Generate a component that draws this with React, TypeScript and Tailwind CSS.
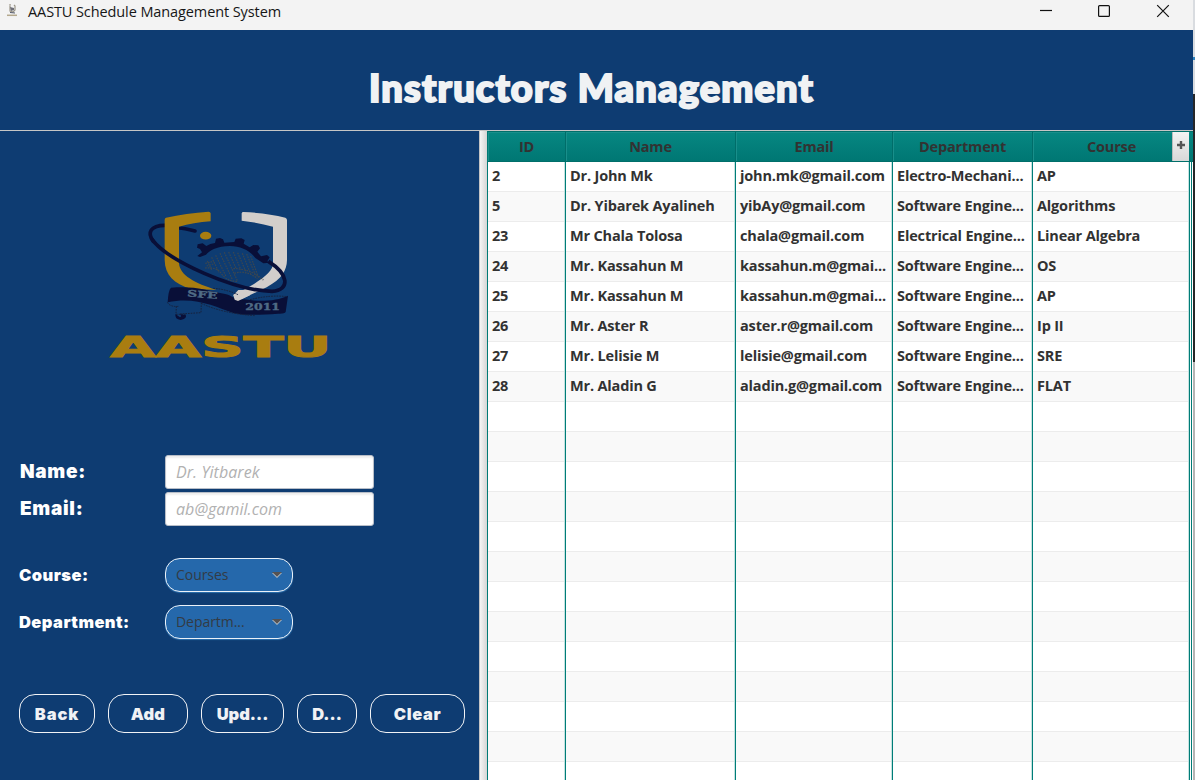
import React from "react";

const rows = [
  ["2", "Dr. John Mk", "john.mk@gmail.com", "Electro-Mechani...", "AP"],
  ["5", "Dr. Yibarek Ayalineh", "yibAy@gmail.com", "Software Engine...", "Algorithms"],
  ["23", "Mr Chala Tolosa", "chala@gmail.com", "Electrical Engine...", "Linear Algebra"],
  ["24", "Mr. Kassahun M", "kassahun.m@gmai...", "Software Engine...", "OS"],
  ["25", "Mr. Kassahun M", "kassahun.m@gmai...", "Software Engine...", "AP"],
  ["26", "Mr. Aster R", "aster.r@gmail.com", "Software Engine...", "Ip II"],
  ["27", "Mr. Lelisie M", "lelisie@gmail.com", "Software Engine...", "SRE"],
  ["28", "Mr. Aladin G", "aladin.g@gmail.com", "Software Engine...", "FLAT"],
];
const columns = ["ID", "Name", "Email", "Department", "Course"];
const gridCols = "grid grid-cols-[78px_170px_157px_140px_157px]";
const allRows = [...rows, ...Array.from({ length: 13 }, () => ["", "", "", "", ""])];

function Logo() {
  return (
    <svg width="240" height="170" viewBox="0 0 720 510" className="block">
      <g fill="none" stroke="#090f38" strokeWidth="11" strokeLinecap="round">
        <path d="M285 93 Q250 84 237 84 M195 76 C152 76 140 98 160 124" />
      </g>
      <path d="M326 35 Q258 39 198 53 Q194 54 194 60 V180 C195 226 222 252 272 266 L350 270 C285 250 239 226 237 190 V80 Q280 68 332 64 V40 Q331 35 326 35Z" fill="#a97d10" />
      <path d="M430 36 Q500 39 556 53 Q561 55 561 60 V180 C560 212 546 236 500 262 L412 303 Q405 303 403 292 L400 284 L430 270 C486 240 519 215 519 190 V80 Q475 68 425 62 V40 Q426 36 430 36Z" fill="#d2cecb" />
      <path d="M156 118 C205 184 405 272 516 274 C572 270 566 222 505 184" fill="none" stroke="#090f38" strokeWidth="11" />
      <ellipse cx="317" cy="107" rx="17" ry="11.5" fill="#a97d10" />
      <path d="M292 168 L306 157 L300 147 L291 143 L293 133 L308 130 L319 138 L331 132 L345 129 L348 116 L360 114 L369 118 L373 128 L403 126 L407 116 L424 115 L434 120 L431 131 L449 142 L460 135 L475 136 L480 145 L472 155 L483 169 L501 165 L509 172 L502 184 L512 188 L490 190 L466 174 C449 150 422 139 390 138 C350 139 330 150 318 164 L300 171Z" fill="#090f38" />
      <g fill="none" stroke="#3c4750" strokeWidth="3.5" strokeDasharray="5 3">
        <path d="M322 183 L335 210 M335 172 L357 217 M347 166 L378 229 M360 160 L397 238 M373 157 L413 244 M386 156 L408 205 M400 156 L423 210 M413 158 L438 216 M427 160 L453 224 M440 162 L468 230 M452 168 L476 234" />
        <path d="M315 204 Q350 200 365 222 T413 244 M400 206 Q450 205 490 240 M403 220 Q440 209 472 236 M316 190 L341 184 M320 198 L344 191" />
      </g>
      <path d="M213 263 C285 257 320 271 360 279 C400 283 399 302 432 298 C480 306 530 303 564 287 L557 336 Q553 342 535 341 C475 345 430 347 400 339 C345 320 285 289 203 307 Q205 270 213 263Z" fill="#090f38" />
      <path d="M415 270 L400 286 L404 299 L414 303 L450 286 L432 270Z" fill="#d2cecb" />
      <g fill="none" stroke="#17223e" strokeWidth="3" strokeDasharray="5 3">
        <path d="M340 265 Q377 267 414 284 M450 299 Q510 284 562 290 M202 307 Q211 322 237 319 M229 319 L228 343 L260 343 M304 308 L303 338 L240 342 M304 310 Q366 340 465 347" />
      </g>
      <path d="M226 342 Q224 358 242 360 Q260 357 258 346 L240 343 Q246 349 240 352 L226 342" fill="#090f38" />
      <g fontFamily="DejaVu Serif, serif" fontWeight="700" fill="#4f6b85" stroke="#4f6b85" strokeWidth="1">
        <text x="261" y="289" fontSize="27" textLength="91" lengthAdjust="spacingAndGlyphs" transform="rotate(5 261 289)">SFE</text>
        <text x="436" y="329" fontSize="27" textLength="104" lengthAdjust="spacingAndGlyphs">2011</text>
      </g>
      <text x="31" y="470" fontFamily="DejaVu Sans, sans-serif" fontWeight="700" fontSize="83" textLength="663" lengthAdjust="spacingAndGlyphs" fill="#a97d10" stroke="#a97d10" strokeWidth="3">AASTU</text>
    </svg>
  );
}

function FormLabel({ children, className }: { children: React.ReactNode; className: string }) {
  return (
    <label className={`w-[146px] shrink-0 font-['Inter',sans-serif] font-black text-white ${className}`}>
      {children}
    </label>
  );
}

function Input({ placeholder }: { placeholder: string }) {
  return (
    <input
      placeholder={placeholder}
      className="h-[34px] w-[209px] rounded-[3px] border border-[#b8bec8] bg-white pl-[10px] font-['Open_Sans',sans-serif] text-[16px] italic tracking-[0.05px] shadow-[inset_0_2px_2px_#eeeeee] outline-none placeholder:text-[#b1b1b1]"
    />
  );
}

function Combo({ text }: { text: string }) {
  return (
    <button className="flex h-[34px] w-[128px] items-center justify-between rounded-[15px] border border-[#eaf1f8] bg-[#2568ab] pl-[10px] pr-[10px] font-['Open_Sans',sans-serif] text-[14px] tracking-[-0.05px] text-[#333b45] shadow-[0_1px_1px_#2b6fae]">
      <span className="-mt-[2px]">{text}</span>
      <svg width="10" height="8" viewBox="0 0 10 8">
        <path d="M0 2 H10 L5 7Z" fill="#b8c0c8" />
        <path d="M0 1 H10 L5 5.7Z" fill="#555252" />
      </svg>
    </button>
  );
}

function ActionButton({ children, className }: { children: React.ReactNode; className: string }) {
  return (
    <button className={`h-[39px] shrink-0 rounded-[16px] border border-[#f1f3f6] pt-px font-['Inter',sans-serif] text-[16.5px] font-black text-[#f0f2f5] ${className}`}>
      {children}
    </button>
  );
}

export default function App() {
  return (
    <div className="flex h-[780px] w-[1195px] overflow-hidden bg-[#0e3c72]">
      <div className="flex w-[1193px] shrink-0 flex-col">
        <div className="flex h-[30px] shrink-0 items-start bg-[#f3f3f3]">
          <svg width="12" height="13" viewBox="0 0 12 13" className="ml-[6px] mt-[4px]">
            <path d="M3 1 L5 .8 M8 1 L9 2 V6 L7 8 L4 7 V2" fill="none" stroke="#9b9689" strokeWidth="1.2" />
            <path d="M4 3 L8 4 L8 6 L5 7Z" fill="#6e6f78" />
            <path d="M4 8.5 L9 9" stroke="#555b6b" />
            <path d="M1 11.3 H11" stroke="#b4a98e" strokeWidth="1.5" />
          </svg>
          <span className="ml-[10px] mt-[1px] whitespace-nowrap font-['Open_Sans',sans-serif] text-[14.5px] leading-[22px] tracking-[-0.1px] text-[#161616]">
            AASTU Schedule Management System
          </span>
          <svg width="132" height="20" viewBox="0 0 132 20" className="ml-auto mr-[22px]" fill="none" stroke="#111" strokeWidth="1.2">
            <path d="M1 10.5 H13" />
            <rect x="59.6" y="5.6" width="10.8" height="10.8" rx="1" />
            <path d="M118.2 5.2 L129.8 16.8 M129.8 5.2 L118.2 16.8" />
          </svg>
        </div>
        <header className="flex h-[101px] shrink-0 items-center justify-center border-b border-[#c6c6c6] pr-[10px] pt-[13px]">
          <h1 className="whitespace-nowrap font-['Lato',sans-serif] text-[38px] font-black leading-none tracking-[1.2px] text-[#f0f2f4] [-webkit-text-stroke:2px_#f0f2f4]">Instructors Management</h1>
        </header>
        <div className="flex min-h-0 flex-1">
          <section className="flex w-[479px] shrink-0 flex-col">
            <div className="pl-[100px] pt-[69px]"><Logo /></div>
            <form className="mt-[85px] flex flex-col pl-[19px]">
              <div className="flex h-[37px] items-start">
                <FormLabel className="pl-px pt-[5px] text-[19px] leading-6 tracking-[0.7px]">Name:</FormLabel>
                <Input placeholder="Dr. Yitbarek" />
              </div>
              <div className="flex h-[66px] items-start">
                <FormLabel className="pl-px pt-[5px] text-[19px] leading-6 tracking-[0.7px]">Email:</FormLabel>
                <Input placeholder="ab@gamil.com" />
              </div>
              <div className="flex h-[47px] items-start">
                <FormLabel className="pt-[5px] text-[16.5px] leading-6 tracking-[0.45px]">Course:</FormLabel>
                <Combo text="Courses" />
              </div>
              <div className="flex h-[34px] items-start">
                <FormLabel className="pt-[5px] text-[16.5px] leading-6 tracking-[0.45px]">Department:</FormLabel>
                <Combo text="Departm..." />
              </div>
            </form>
            <div className="mt-[55px] flex gap-[13px] pl-[19px]">
              <ActionButton className="w-[76px] tracking-[0.9px]">Back</ActionButton>
              <ActionButton className="w-[80px] tracking-[0.3px]">Add</ActionButton>
              <ActionButton className="w-[83px]">Upd...</ActionButton>
              <ActionButton className="w-[60px]">D...</ActionButton>
              <ActionButton className="w-[95px] tracking-[0.6px]">Clear</ActionButton>
            </div>
          </section>
          <div className="w-[8px] shrink-0 border-l border-[#c3c3c3] bg-linear-to-r from-[#f5f5f5] to-[#d5d5d5]" />
          <section className="flex w-[706px] shrink-0 flex-col border-l border-[#007a75] bg-white font-['Open_Sans',sans-serif] text-[14.5px] font-bold tracking-[-0.17px] text-[#323232]">
            <div className="flex h-[31px] shrink-0 border-b border-t border-[#006f6a] bg-linear-to-b from-[#078782] to-[#007773]">
              <div className={gridCols}>
                {columns.map((c) => (
                  <div key={c} className="flex items-center justify-center border-r border-[#006d69] shadow-[inset_1px_1px_0_#198f8b] last:border-0">
                    {c}
                  </div>
                ))}
              </div>
              <div className="-ml-[18px] flex w-[17px] justify-center border-l border-[#bbb] bg-linear-to-b from-[#f3f3f3] to-[#d8d8d8] pt-[9px]">
                <svg width="8" height="8" viewBox="0 0 8 8"><path d="M4 0V8M0 4H8" stroke="#555" strokeWidth="2.4" /></svg>
              </div>
            </div>
            <div className="flex min-h-0 flex-1 overflow-hidden">
              <div className="flex flex-col">
                {allRows.map((row, i) => (
                  <div key={i} className={`${gridCols} h-[30px] shrink-0 odd:bg-white even:bg-[#f9f9f9]`}>
                    {row.map((v, j) => (
                      <div key={j} className="overflow-hidden whitespace-nowrap border-r border-[#007d78] pl-[4px] leading-[28px] shadow-[inset_-1px_0_0_#c4e2e0,inset_0_-1px_0_#ececec]">
                        {v}
                      </div>
                    ))}
                  </div>
                ))}
              </div>
              <div className="ml-px w-px bg-[#007a75]" />
            </div>
          </section>
        </div>
      </div>
      <div className="flex w-[2px] shrink-0 flex-col">
        <div className="h-[57px] bg-[#d9dce0]" />
        <div className="h-[3px] bg-[#2d82bd]" />
        <div className="h-[34px] bg-[#d9dce0]" />
        <div className="h-[268px] bg-[#252729]" />
        <div className="flex-1 bg-[#b5b5b5]" />
      </div>
    </div>
  );
}
